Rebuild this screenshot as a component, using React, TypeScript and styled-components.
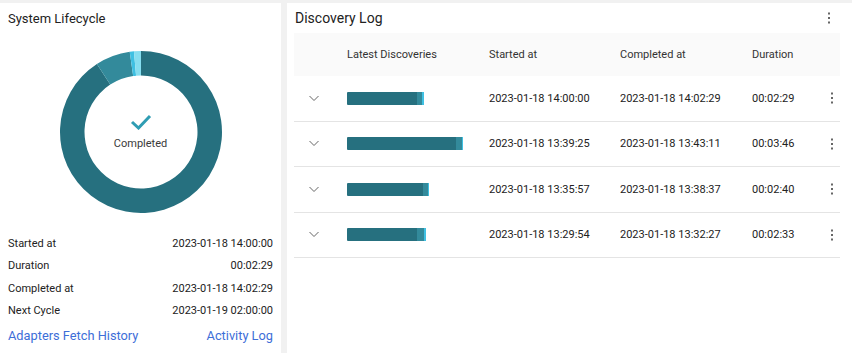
import React from "react";
import styled, { createGlobalStyle } from "styled-components";

const GlobalStyle = createGlobalStyle`
  html, body {
    margin: 0;
    padding: 0;
    background: #f1f1f1;
    font-family: Roboto, "Liberation Sans", sans-serif;
    color: #222;
  }
`;

const DARK = "#26707f";
const MID = "#338a9b";
const BRIGHT = "#3fc0e2";
const PALE = "#86def0";

type Discovery = {
  bar: [number, number, number];
  started: string;
  completed: string;
  duration: string;
};

const discoveries: Discovery[] = [
  { bar: [70, 5, 2], started: "2023-01-18 14:00:00", completed: "2023-01-18 14:02:29", duration: "00:02:29" },
  { bar: [109, 6, 1], started: "2023-01-18 13:39:25", completed: "2023-01-18 13:43:11", duration: "00:03:46" },
  { bar: [76, 5, 1], started: "2023-01-18 13:35:57", completed: "2023-01-18 13:38:37", duration: "00:02:40" },
  { bar: [70, 7, 2], started: "2023-01-18 13:29:54", completed: "2023-01-18 13:32:27", duration: "00:02:33" },
];

const lifecycle = [
  { label: "Started at", value: "2023-01-18 14:00:00" },
  { label: "Duration", value: "00:02:29" },
  { label: "Completed at", value: "2023-01-18 14:02:29" },
  { label: "Next Cycle", value: "2023-01-19 02:00:00" },
];

// donut segments in degrees, clockwise from 12 o'clock
const segments = [
  { from: 0, to: 327, color: DARK },
  { from: 327, to: 352, color: MID },
  { from: 352, to: 355, color: BRIGHT },
  { from: 355, to: 360, color: PALE },
];

function arcPath(cx: number, cy: number, r: number, ri: number, a0: number, a1: number) {
  const rad = (a: number) => ((a - 90) * Math.PI) / 180;
  const p = (rr: number, a: number) => [cx + rr * Math.cos(rad(a)), cy + rr * Math.sin(rad(a))];
  const [x0, y0] = p(r, a0);
  const [x1, y1] = p(r, a1);
  const [x2, y2] = p(ri, a1);
  const [x3, y3] = p(ri, a0);
  const large = a1 - a0 > 180 ? 1 : 0;
  return `M${x0} ${y0} A${r} ${r} 0 ${large} 1 ${x1} ${y1} L${x2} ${y2} A${ri} ${ri} 0 ${large} 0 ${x3} ${y3} Z`;
}

function Donut() {
  return (
    <DonutWrap>
      <svg width="164" height="164" viewBox="0 0 164 164">
        {segments.map((s) => (
          <path key={s.from} d={arcPath(82, 82, 81, 56.5, s.from, s.to)} fill={s.color} />
        ))}
      </svg>
      <DonutCenter>
        <svg width="22" height="16" viewBox="0 0 22 16">
          <path d="M2 8 L8.5 14 L20 2" fill="none" stroke="#2f9db3" strokeWidth="3" />
        </svg>
        <CenterLabel>Completed</CenterLabel>
      </DonutCenter>
    </DonutWrap>
  );
}

function Chevron() {
  return (
    <svg width="12" height="7" viewBox="0 0 12 7">
      <path d="M1.5 1 L6 5.5 L10.5 1" fill="none" stroke="#666" strokeWidth="1" />
    </svg>
  );
}

function Kebab() {
  return (
    <svg width="4" height="12" viewBox="0 0 4 12">
      <rect x="1" y="0.5" width="2" height="2" fill="#666" />
      <rect x="1" y="5" width="2" height="2" fill="#666" />
      <rect x="1" y="9.5" width="2" height="2" fill="#666" />
    </svg>
  );
}

export default function App() {
  return (
    <>
      <GlobalStyle />
      <Page>
        <LeftPanel>
          <PanelTitle>System Lifecycle</PanelTitle>
          <Donut />
          <InfoList>
            {lifecycle.map((r) => (
              <InfoRow key={r.label}>
                <span>{r.label}</span>
                <span>{r.value}</span>
              </InfoRow>
            ))}
          </InfoList>
          <Links>
            <Link>Adapters Fetch History</Link>
            <Link>Activity Log</Link>
          </Links>
        </LeftPanel>
        <RightPanel>
          <RightHeader>
            <LogTitle>Discovery Log</LogTitle>
            <Kebab />
          </RightHeader>
          <Table>
            <HeadRow>
              <span />
              <span>Latest Discoveries</span>
              <span>Started at</span>
              <span>Completed at</span>
              <span>Duration</span>
              <span />
            </HeadRow>
            {discoveries.map((d) => (
              <Row key={d.started}>
                <ChevronCell>
                  <Chevron />
                </ChevronCell>
                <Bar>
                  <BarPart $color={DARK} style={{ width: d.bar[0] }} />
                  <BarPart $color={MID} style={{ width: d.bar[1] }} />
                  <BarPart $color={BRIGHT} style={{ width: d.bar[2] }} />
                </Bar>
                <span>{d.started}</span>
                <span>{d.completed}</span>
                <span>{d.duration}</span>
                <KebabCell>
                  <Kebab />
                </KebabCell>
              </Row>
            ))}
          </Table>
        </RightPanel>
      </Page>
    </>
  );
}

const Page = styled.div`
  display: flex;
  gap: 6px;
  padding-top: 3px;
  height: 350px;
`;

const LeftPanel = styled.section`
  width: 281px;
  flex-shrink: 0;
  background: #fff;
  box-sizing: border-box;
  padding: 0 8px;
  display: flex;
  flex-direction: column;
`;

const PanelTitle = styled.h2`
  margin: 0;
  padding-top: 8px;
  height: 22px;
  font-size: 13px;
  font-weight: 400;
  line-height: 16px;
  color: #222;
`;

const DonutWrap = styled.div`
  position: relative;
  align-self: center;
  width: 164px;
  height: 164px;
  margin-top: 17px;
`;

const DonutCenter = styled.div`
  position: absolute;
  inset: 0;
  display: flex;
  flex-direction: column;
  align-items: center;
  justify-content: center;
  gap: 7px;
`;

const CenterLabel = styled.span`
  font-size: 11px;
  color: #3a3a3a;
`;

const InfoList = styled.div`
  margin-top: 19px;
  display: flex;
  flex-direction: column;
`;

const InfoRow = styled.div`
  display: flex;
  justify-content: space-between;
  height: 22.3px;
  line-height: 22px;
  font-size: 11px;
  color: #222;
`;

const Links = styled.div`
  display: flex;
  justify-content: space-between;
  margin-top: 6px;
`;

const Link = styled.a`
  font-size: 12.8px;
  color: #3d6ed8;
  cursor: pointer;
`;

const RightPanel = styled.section`
  flex: 1;
  background: #fff;
  padding: 0 12px 0 7px;
  display: flex;
  flex-direction: column;
`;

const RightHeader = styled.div`
  display: flex;
  justify-content: space-between;
  align-items: center;
  height: 30px;
  padding-right: 9px;
`;

const LogTitle = styled.h2`
  margin: 0;
  padding-left: 1px;
  font-size: 14px;
  font-weight: 400;
  color: #222;
`;

const Table = styled.div`
  display: flex;
  flex-direction: column;
`;

const HeadRow = styled.div`
  display: grid;
  grid-template-columns: 53px 142px 131px 132px 72px 1fr;
  align-items: center;
  height: 43px;
  background: #fafafa;
  font-size: 11px;
  color: #333;
`;

const Row = styled.div`
  display: grid;
  grid-template-columns: 53px 142px 131px 132px 72px 1fr;
  align-items: center;
  height: 44.5px;
  border-bottom: 1px solid #e4e4e4;
  font-size: 11px;
  color: #222;
`;

const ChevronCell = styled.span`
  display: flex;
  padding-left: 14px;
`;

const Bar = styled.span`
  display: flex;
  height: 13px;
  border-radius: 1px;
  overflow: hidden;
`;

const BarPart = styled.span<{ $color: string }>`
  display: block;
  height: 100%;
  background: ${(p) => p.$color};
`;

const KebabCell = styled.span`
  display: flex;
  justify-content: center;
`;
